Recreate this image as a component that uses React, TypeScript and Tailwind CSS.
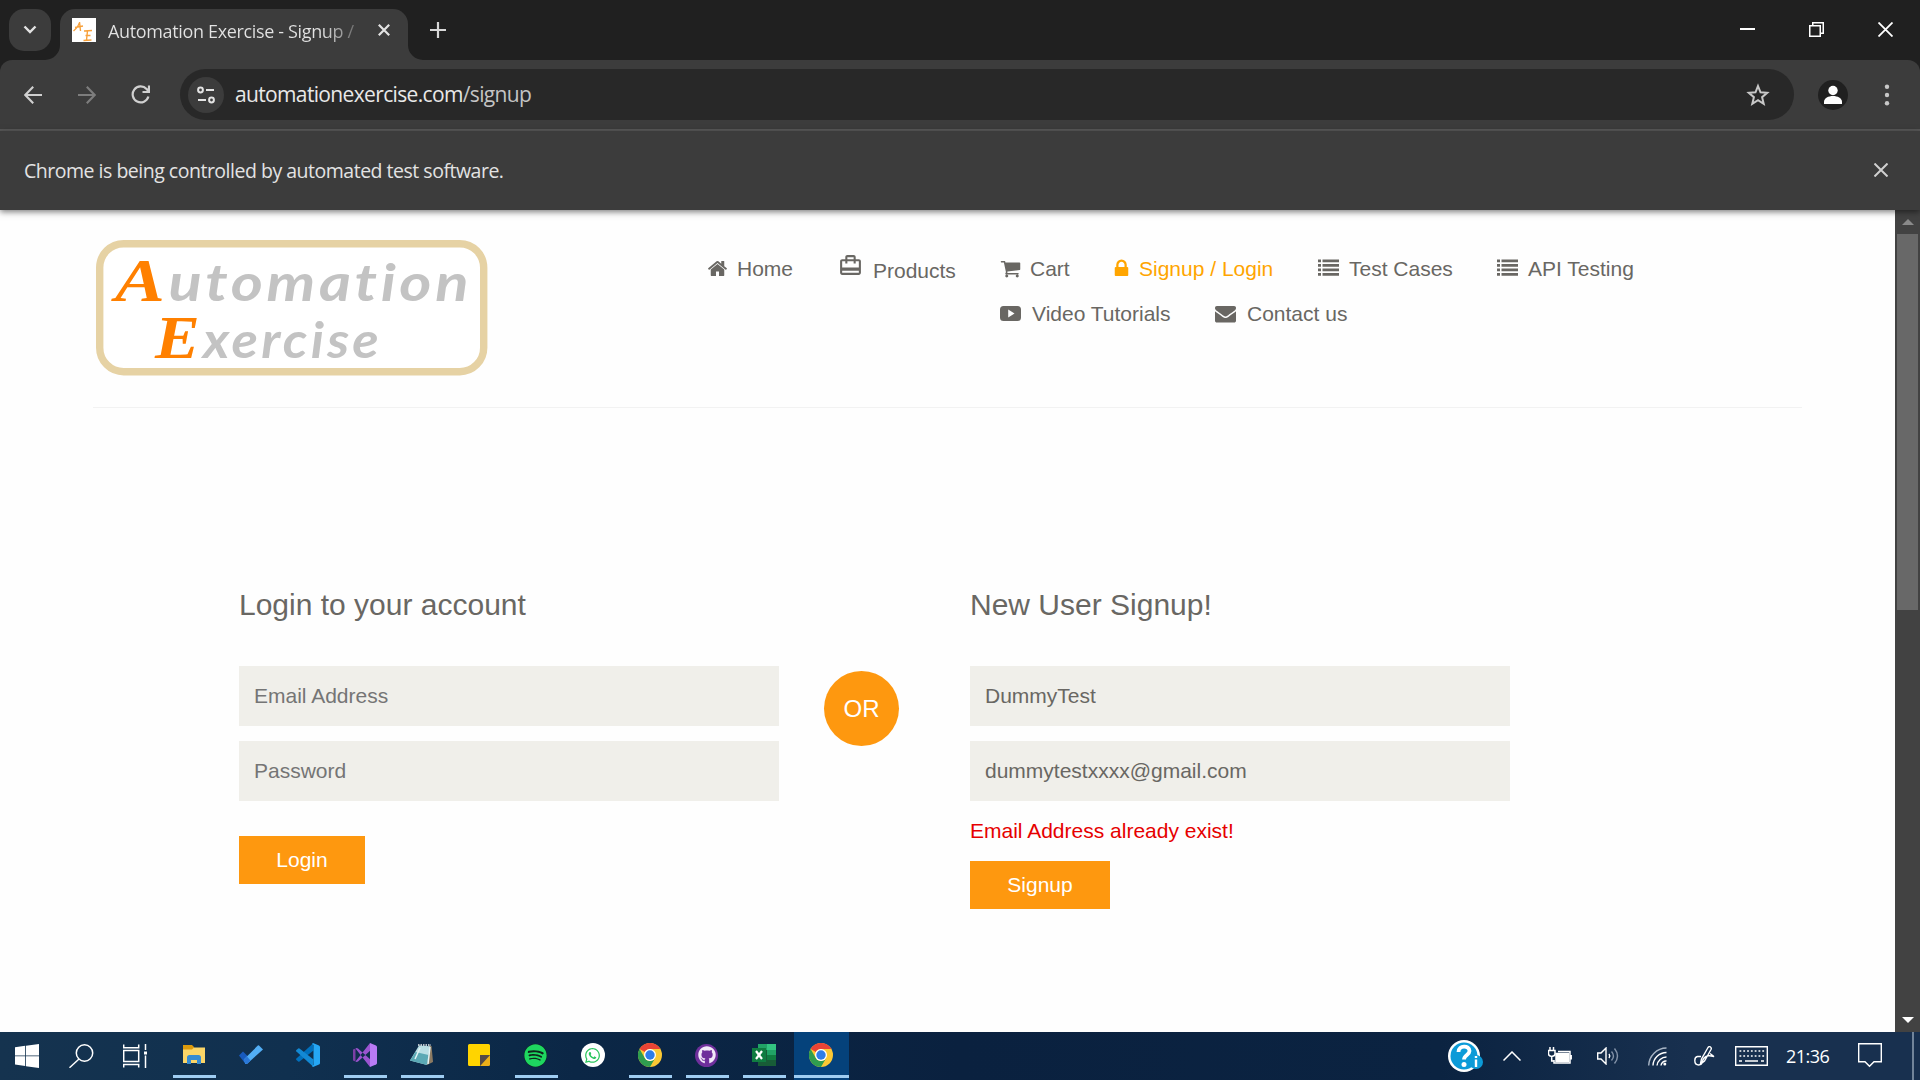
import React from "react";
import { FaSpotify, FaGithub, FaWhatsapp } from "react-icons/fa";

const HOME =
  "M1472 992v480q0 26-19 45t-45 19h-384v-384h-256v384h-384q-26 0-45-19t-19-45v-480q0-1 .5-3t.5-3l575-474 575 474q1 2 1 6zm223-69l-62 74q-8 9-21 11h-3q-13 0-21-7l-692-577-692 577q-12 8-24 7-13-2-21-11l-62-74q-8-10-7-23.5t11-21.5l719-599q32-26 76-26t76 26l244 204v-195q0-14 9-23t23-9h192q14 0 23 9t9 23v408l219 182q10 8 11 21.5t-7 23.5z";
const CART =
  "M704 1536q0 52-38 90t-90 38-90-38-38-90 38-90 90-38 90 38 38 90zm896 0q0 52-38 90t-90 38-90-38-38-90 38-90 90-38 90 38 38 90zm128-1088v512q0 24-16.5 42.5t-40.5 21.5l-1044 122q13 60 13 70 0 16-24 64h920q26 0 45 19t19 45-19 45-45 19h-1024q-26 0-45-19t-19-45q0-11 8-31.5t16-36 21.5-40 15.5-29.5l-177-823h-204q-26 0-45-19t-19-45 19-45 45-19h256q16 0 28.5 6.5t19.5 15.5 13 24.5 8 26 5.5 29.5 4.5 26h1201q26 0 45 19t19 45z";
const LOCK =
  "M640 768h512v-192q0-106-75-181t-181-75-181 75-75 181v192zm832 96v576q0 40-28 68t-68 28h-960q-40 0-68-28t-28-68v-576q0-40 28-68t68-28h32v-192q0-184 132-316t316-132 316 132 132 316v192h32q40 0 68 28t28 68z";
const MAIL =
  "M1792 710v794q0 66-47 113t-113 47h-1472q-66 0-113-47t-47-113v-794q44 49 101 87 362 246 497 345 57 42 92.5 65.5t94.5 48 110 24.5h2q51 0 110-24.5t94.5-48 92.5-65.5q170-123 498-345 57-39 100-87zm0-294q0 79-49 151t-122 123q-376 261-468 325-10 7-42.5 31t-54 38.5-52 32.5-57.5 27-50 9h-2q-23 0-50-9t-57.5-27-52-32.5-54-38.5-42.5-31q-91-64-262-182.5t-205-142.5q-62-42-117-115.5t-55-136.5q0-78 41.5-130t118.5-52h1472q65 0 112.5 47t47.5 113z";
const LIST =
  "M0 128h256v230H0zM384 128h1408v230H384zM0 512h256v230H0zM384 512h1408v230H384zM0 896h256v230H0zM384 896h1408v230H384zM0 1280h256v230H0zM384 1280h1408v230H384z";
const VIDEO =
  "M300 256h1192q300 0 300 300v680q0 300-300 300H300q-300 0-300-300V556q0-300 300-300zM700 560v680l540-340z";
const TRAVEL =
  "M20 6h-3V4c0-1.11-.89-2-2-2H9c-1.11 0-2 .89-2 2v2H4c-1.11 0-2 .89-2 2v11c0 1.11.89 2 2 2h16c1.11 0 2-.89 2-2V8c0-1.11-.89-2-2-2zM9 4h6v2H9V4zm11 15H4v-2h16v2zm0-5H4V8h3v2h2V8h6v2h2V8h3v6z";

function Glyph({ d, className = "" }: { d: string; className?: string }) {
  return (
    <svg viewBox="0 0 1792 1792" fill="currentColor" fillRule="evenodd" className={"h-[21px] w-[21px] shrink-0 " + className}>
      <path d={d} />
    </svg>
  );
}

function TabStrip() {
  return (
    <div className="flex h-[60px] items-start bg-[#202020] pl-[9px] pt-[9px] text-[#e3e3e3]">
      <div className="flex h-[42px] w-[42px] items-center justify-center rounded-[15px] bg-[#3c3c3c]">
        <svg width="14" height="10" viewBox="0 0 14 10" fill="none" stroke="currentColor" strokeWidth="2.4">
          <path d="M1.500 1.500l5.500 5.500 5.500-5.500" />
        </svg>
      </div>
      <div className="relative ml-[9px] flex h-[51px] w-[348px] rounded-t-[15px] bg-[#3c3c3c] pl-3 pt-[9px]">
        <svg className="absolute -left-[15px] bottom-0" width="15" height="15" viewBox="0 0 15 15" fill="#3c3c3c">
          <path d="M15 0v15H0A15 15 0 0 0 15 0z" />
        </svg>
        <svg className="absolute -right-[15px] bottom-0" width="15" height="15" viewBox="0 0 15 15" fill="#3c3c3c">
          <path d="M0 0v15h15A15 15 0 0 1 0 0z" />
        </svg>
        <svg width="24" height="24" viewBox="0 0 24 24" fill="none" stroke="#f7a13c" strokeWidth="1.400">
          <path d="M0 0h24v24H0z" fill="#fff" stroke="none" />
          <path d="M1.500 13C5 10 7 7 7.500 4l1 9M3 9.500l8-1.500M12 13l8-.5M15.500 13l-1 9M13.500 17.500h5M11.500 22.500l8-.5" />
        </svg>
        <div className="ml-3 mt-px h-6 w-[252px] overflow-hidden whitespace-nowrap bg-gradient-to-r from-[#e3e3e3] from-85% to-[#777] to-97% bg-clip-text font-['Open_Sans','Noto_Sans',sans-serif] text-[18px] leading-[25px] tracking-[-0.350px] text-transparent">
          Automation Exercise - Signup /
        </div>
        <svg className="ml-[18px] mt-[6px]" width="12" height="12" viewBox="0 0 12 12" stroke="currentColor" strokeWidth="2.2">
          <path d="M.8.8l10.400 10.400M11.200.8L.8 11.200" />
        </svg>
      </div>
      <svg className="ml-[22px] mt-[13px]" width="16" height="16" viewBox="0 0 16 16" stroke="#d8d8d8" strokeWidth="2.2">
        <path d="M8 0v16M0 8h16" />
      </svg>
      <svg className="ml-[1294px] mt-[13px]" width="15" height="15" viewBox="0 0 15 15" stroke="#fff" strokeWidth="2">
        <path d="M0 7h15" />
      </svg>
      <svg className="ml-[54px] mt-[13px]" width="15" height="15" viewBox="0 0 15 15" fill="none" stroke="#fff" strokeWidth="1.500">
        <path d="M.75 3.750h10.500v10.500H.75zM3.750 3.500V.75h10.500v10.500H11.500" />
      </svg>
      <svg className="ml-[54px] mt-[13px]" width="15" height="15" viewBox="0 0 15 15" stroke="#fff" strokeWidth="1.800">
        <path d="M.5.5l14 14M14.500.5l-14 14" />
      </svg>
    </div>
  );
}

function Toolbar() {
  return (
    <div className="bg-[#202020]">
      <div className="flex h-[71px] items-center rounded-t-[12px] bg-[#3c3c3c] pb-[2px] pl-[24px] text-[#d0d0d0] shadow-[inset_0_-2px_0_#585858]">
        <svg width="18" height="18" viewBox="0 0 18 18" fill="none" stroke="currentColor" strokeWidth="2.100">
          <path d="M18 9H1.500M9.200.8L1.300 9l7.900 8.200" />
        </svg>
        <svg className="ml-[36px]" width="18" height="18" viewBox="0 0 18 18" fill="none" stroke="#7d7d7d" strokeWidth="2.100">
          <path d="M0 9h16.500M8.800.8L16.700 9l-7.900 8.200" />
        </svg>
        <svg className="ml-[35px]" width="19" height="19" viewBox="0 0 19 19" fill="none" stroke="currentColor" strokeWidth="2.200">
          <path d="M17.400 11.500A8 8 0 1 1 15.600 4l2 2.400M11.500 7H18V.5" />
        </svg>
        <div className="ml-[30px] flex h-[51px] w-[1614px] items-center rounded-full bg-[#282828] pl-2">
          <div className="flex h-9 w-9 items-center justify-center rounded-full bg-[#3c3c3c]">
            <svg width="18" height="18" viewBox="0 0 18 18" fill="none" stroke="#e3e3e3" strokeWidth="2">
              <circle cx="3.500" cy="4" r="2.400" />
              <circle cx="14.500" cy="14" r="2.400" />
              <path d="M9 4h8M1 14h8" />
            </svg>
          </div>
          <div className="ml-[11px] w-[1510px] whitespace-nowrap font-['Open_Sans','Noto_Sans',sans-serif] text-[21px] leading-none tracking-[-0.650px] text-[#e8e8e8]">
            automationexercise.com<span className="text-[#c4c4c4]">/signup</span>
          </div>
          <svg className="ml-[1px]" width="24" height="24" viewBox="0 0 24 24" fill="none" stroke="#c8c8c8" strokeWidth="2">
            <path d="M12 3l2.500 6.300 6.700.5-5.100 4.400 1.600 6.600L12 17.200l-5.700 3.600 1.600-6.600-5.100-4.400 6.700-.5z" />
          </svg>
        </div>
        <svg className="ml-6" width="30" height="30" viewBox="0 0 30 30" fill="#fff">
          <circle cx="15" cy="15" r="15" fill="#202020" />
          <circle cx="15" cy="10.500" r="4.700" />
          <path d="M6 24v-2c0-8 18-8 18 0v2z" />
        </svg>
        <svg className="ml-[36px]" width="6" height="22" viewBox="0 0 6 22" fill="#c8c8c8">
          <circle cx="3" cy="2.700" r="2.200" />
          <circle cx="3" cy="11" r="2.200" />
          <circle cx="3" cy="19.300" r="2.200" />
        </svg>
      </div>
    </div>
  );
}

function InfoBar() {
  return (
    <div className="relative z-10 flex h-[79px] items-center justify-between bg-[#3c3c3c] pl-6 pr-8 shadow-[0_2px_6px_rgba(0,0,0,0.5)]">
      <div className="whitespace-nowrap font-['Open_Sans','Noto_Sans',sans-serif] text-[19.500px] leading-none tracking-[-0.490px] text-[#e3e3e3]">
        Chrome is being controlled by automated test software.
      </div>
      <svg width="14" height="14" viewBox="0 0 14 14" stroke="#d0d0d0" strokeWidth="2" className="-mt-0.5">
        <path d="M.5.5l13 13M13.500.5l-13 13" />
      </svg>
    </div>
  );
}

function Logo() {
  return (
    <svg width="392" height="136" viewBox="0 0 392 136" className="shrink-0">
      <rect x="3.700" y="3.700" width="384" height="128" rx="24" fill="#fff" stroke="#e6d2a4" strokeWidth="7.400" />
      <g fontFamily="Lato, sans-serif" fontStyle="italic" fontWeight="700" fill="#c3c3c3" className="[font-variant-ligatures:none]">
        <text x="19" y="61" fontSize="51" textLength="357" lengthAdjust="spacingAndGlyphs" className="tracking-[3px]">
          <tspan fontFamily="Liberation Serif, serif" fontSize="62" fill="#ff8000">A</tspan>utomation
        </text>
        <text x="59" y="118" fontSize="50" textLength="227" lengthAdjust="spacingAndGlyphs" className="tracking-[3px]">
          <tspan fontFamily="Liberation Serif, serif" fontSize="62" fill="#ff8000">E</tspan>xercise
        </text>
      </g>
    </svg>
  );
}

function NavItem({ className, gap, icon, children }: { className: string; gap: string; icon: React.ReactNode; children: React.ReactNode }) {
  return (
    <a className={"flex h-[45px] shrink-0 items-center whitespace-nowrap " + className}>
      <span className={"flex shrink-0 " + gap}>{icon}</span>
      {children}
    </a>
  );
}

function Header() {
  return (
    <header className="ml-[93px] flex h-[198px] w-[1709px] border-b border-[#f2f2f2] pl-[3px] pt-[30px]">
      <Logo />
      <nav className="ml-[220px] pt-[6px] text-[21px] leading-[30px] text-[#696763]">
        <div className="flex">
          <NavItem className="w-[131px]" gap="w-[29px]" icon={<Glyph d={HOME} className="-ml-px" />}>Home</NavItem>
          <NavItem
            className="w-[161px]"
            gap="w-[34px]"
            icon={
              <svg width="25" height="25" viewBox="0 0 24 24" fill="currentColor" className="-mt-[6px] -ml-px shrink-0">
                <path d={TRAVEL} />
              </svg>
            }
          >
            <span className="pt-1">Products</span>
          </NavItem>
          <NavItem className="w-[114px]" gap="w-[30px]" icon={<Glyph d={CART} />}>Cart</NavItem>
          <NavItem className="w-[204px] text-[#ffa500]" gap="w-[25px]" icon={<Glyph d={LOCK} className="-ml-[3px]" />}>Signup / Login</NavItem>
          <NavItem className="w-[179px]" gap="w-[31px]" icon={<Glyph d={LIST} />}>Test Cases</NavItem>
          <NavItem className="w-[150px]" gap="w-[31px]" icon={<Glyph d={LIST} />}>API Testing</NavItem>
        </div>
        <div className="ml-[292px] flex">
          <NavItem className="w-[215px]" gap="w-[32px]" icon={<Glyph d={VIDEO} />}>Video Tutorials</NavItem>
          <NavItem className="w-[150px]" gap="w-[32px]" icon={<Glyph d={MAIL} />}>Contact us</NavItem>
        </div>
      </nav>
    </header>
  );
}

function Field({ children, muted = false }: { children: React.ReactNode; muted?: boolean }) {
  return (
    <div className={"mb-[15px] flex h-[60px] items-center bg-[#f0efea] px-[15px] pb-[2px] text-[21px] leading-none " + (muted ? "text-[#757575]" : "text-[#696763]")}>
      {children}
    </div>
  );
}

function Forms() {
  return (
    <main className="flex pl-[239px] pt-[179px]">
      <section className="w-[540px]">
        <h2 className="mb-[44px] text-[30px] leading-[35px] text-[#696763]">Login to your account</h2>
        <Field muted>Email Address</Field>
        <Field muted>Password</Field>
        <button className="mt-[35px] block h-[48px] w-[126px] bg-[#fe980f] pb-px text-[21px] text-white">Login</button>
      </section>
      <div className="ml-[45px] mt-[84px] flex h-[75px] w-[75px] items-center justify-center rounded-full bg-[#fe980f] text-[24px] text-white">OR</div>
      <section className="ml-[71px] w-[540px]">
        <h2 className="mb-[44px] text-[30px] leading-[35px] text-[#696763]">New User Signup!</h2>
        <Field>DummyTest</Field>
        <Field>dummytestxxxx@gmail.com</Field>
        <p className="text-[21px] leading-[30px] text-[#e60000]">Email Address already exist!</p>
        <button className="mt-[15px] block h-[48px] w-[140px] bg-[#fe980f] pb-px text-[21px] text-white">Signup</button>
      </section>
    </main>
  );
}

function Scrollbar() {
  return (
    <div className="flex w-[25px] flex-col items-center bg-[#424242]">
      <svg className="mt-[9px]" width="12" height="6" viewBox="0 0 12 6" fill="#8a8a8a">
        <path d="M0 6l6-6 6 6z" />
      </svg>
      <div className="mt-[9px] h-[376px] w-[21px] bg-[#686868]" />
      <svg className="mb-[9px] mt-auto" width="12" height="6" viewBox="0 0 12 6" fill="#fff">
        <path d="M0 0l6 6 6-6z" />
      </svg>
    </div>
  );
}

function Slot({ children, open = false, active = false }: { children: React.ReactNode; open?: boolean; active?: boolean }) {
  return (
    <div className={"relative flex h-12 w-[57px] shrink-0 items-center justify-center pr-[2px] " + (active ? "bg-[linear-gradient(90deg,transparent_1px,#05427b_1px,#05427b_56px,transparent_56px)]" : "")}>
      <div className="-mt-[2px]">{children}</div>
      {(open || active) && <div className={"absolute bottom-[2px] h-[3px] bg-[#9fcdf2] " + (active ? "left-px w-[55px]" : "left-[7px] w-[43px]")} />}
    </div>
  );
}

function Chrome() {
  return (
    <svg width="24" height="24" viewBox="0 0 24 24">
      <circle cx="12" cy="12" r="12" fill="#fcc934" />
      <path d="M1.600 6A12 12 0 0 1 22.400 6H12A6 6 0 0 0 6.800 9z" fill="#ea4335" />
      <path d="M1.600 6A12 12 0 0 0 12 24l5.200-9A6 6 0 0 1 6.800 15z" fill="#2f9e4f" />
      <circle cx="12" cy="12" r="6" fill="#fff" />
      <circle cx="12" cy="12" r="4.700" fill="#2f7de9" />
    </svg>
  );
}

function Apps() {
  return (
    <div className="ml-[19px] flex">
      <Slot open>
        <svg width="22" height="20" viewBox="0 0 22 20">
          <path d="M0 0h9l2 2v4H0z" fill="#dc9a0c" />
          <path d="M0 4.500h9l2-2h11V18H0z" fill="#fbd567" />
          <path d="M4 19v-6.500Q4 10 6.500 10h9q2.500 0 2.500 2.500V19h-4v-4H8v4z" fill="#368bd2" />
        </svg>
      </Slot>
      <Slot>
        <svg width="24" height="20" viewBox="0 0 24 20">
          <path d="M0 10.500l4-4 8 8-4 4.200q-.8.600-1.600 0z" fill="#185abd" />
          <path d="M6.400 18.700q.9.700 1.800 0L24 4.500 20 .6q-.6-.5-1.200 0L4.800 14.500z" fill="#52aef5" />
          <path d="M4.500 15l3.500-3.500 3.500 4-3 3q-1 .8-2 0z" fill="#2b78d8" />
        </svg>
      </Slot>
      <Slot>
        <svg width="24" height="24" viewBox="0 0 24 24">
          <path d="M17.500 7.500L3.500 18.500q-.7.500-1.300 0L.4 16.900q-.7-.7 0-1.400L17 .5z" fill="#0070bd" />
          <path d="M17.500 16.500L3.500 5.500q-.7-.5-1.300 0L.4 7.100q-.7.700 0 1.400L17 23.500z" fill="#1389d4" />
          <path d="M17 0l6 2.500q1 .5 1 1.500v16q0 1-1 1.500L17 24l-1-1 1.500-1V2L16 1z" fill="#25a7f5" />
        </svg>
      </Slot>
      <Slot open>
        <svg width="24" height="24" viewBox="0 0 24 24">
          <path d="M0 6.500l2.500-1v13L0 17.500z" fill="#7b3fa5" />
          <path d="M2.500 5.500L17 24l1-7L5 5.500q-1.300-.8-2.500 0zM2.500 18.500L17 0l1 7L5 18.500q-1.300.8-2.500 0z" fill="#9a54d0" />
          <path d="M17 0l6 2.500q1 .5 1 1.500v16q0 1-1 1.500L17 24z" fill="#b97bf5" />
        </svg>
      </Slot>
      <Slot open>
        <svg width="24" height="22" viewBox="0 0 24 22">
          <path d="M19 1.500l2.500.5L23 18l-6 3z" fill="#8b7a62" />
          <path d="M9 1.500l11 .8L17 21 0 16.500z" fill="#b9dfe5" />
          <path d="M5.500 8l13 3-1.500 10L0 16.500z" fill="#5ba9b5" />
          <path d="M8 1h13" stroke="#eef2f2" strokeWidth="1.500" strokeDasharray="1.500 1" />
          <path d="M10 4L5 15M20 3l-2 17" stroke="#e2f3f5" strokeWidth="1.500" />
        </svg>
      </Slot>
      <Slot>
        <svg width="22" height="22" viewBox="0 0 22 22">
          <path d="M1.500 0h19Q22 0 22 1.500V11H12v11H1.500Q0 22 0 20.500v-19Q0 0 1.500 0z" fill="#ffd400" />
          <path d="M12 11h10L12 22z" fill="#554a45" />
          <path d="M22 11v9.500q0 1.500-1.500 1.500H12z" fill="#edb019" />
        </svg>
      </Slot>
      <Slot open>
        <div className="rounded-full bg-[#10241c]">
          <FaSpotify size={23} color="#1ed760" />
        </div>
      </Slot>
      <Slot>
        <div className="flex h-6 w-6 items-center justify-center rounded-full bg-white">
          <FaWhatsapp size={17} color="#2cc65e" />
        </div>
      </Slot>
      <Slot open>
        <Chrome />
      </Slot>
      <Slot open>
        <div className="flex h-[23px] w-[23px] items-center justify-center rounded-full bg-[#6e2f9b]">
          <FaGithub size={18} color="#f1e8f8" />
        </div>
      </Slot>
      <Slot open>
        <svg width="24" height="22" viewBox="0 0 24 22">
          <path d="M6 0h9v6H6z" fill="#21a366" />
          <path d="M15 0h9v6h-9z" fill="#33c481" />
          <path d="M6 6h9v10H6z" fill="#185c37" />
          <path d="M15 6h9v5h-9z" fill="#21a366" />
          <path d="M15 11h9v5h-9z" fill="#107c41" />
          <path d="M6 16h18v6H6z" fill="#185c37" />
          <path d="M0 4h14v14H0z" fill="#107c41" />
          <path d="M4 7l6 8M10 7l-6 8" stroke="#fff" strokeWidth="2.200" />
        </svg>
      </Slot>
      <Slot active>
        <Chrome />
      </Slot>
    </div>
  );
}

function Tray() {
  return (
    <div className="ml-auto flex h-12 shrink-0 items-center text-white">
      <svg width="36" height="34" viewBox="0 0 36 34">
        <circle cx="16" cy="17" r="16" fill="#fff" />
        <circle cx="16" cy="17" r="13.500" fill="#0c9bd8" />
        <path d="M10.500 13c0-7 11-7 11-1 0 4-5.500 4-5.500 8.500" fill="none" stroke="#fff" strokeWidth="3.800" />
        <circle cx="16" cy="25.500" r="2.500" fill="#fff" />
        <circle cx="28" cy="23" r="7" fill="#0c9bd8" />
        <path d="M28 20.500v7.500M28 17v2" stroke="#fff" strokeWidth="2.400" />
      </svg>
      <svg className="ml-[19px]" width="18" height="10" viewBox="0 0 18 10" fill="none" stroke="#fff" strokeWidth="1.500">
        <path d="M.5 9.500L9 1l8.500 8.500" />
      </svg>
      <svg className="ml-[27px]" width="24" height="18" viewBox="0 0 24 18" fill="none" stroke="#fff" strokeWidth="1.500">
        <path d="M2 0v3M5.500 0v3M.5 3.500H7V7Q7 9 3.700 9.500 .5 9 .5 7zM3.700 10v4H6M10 4.500h12V16H6v-3M23.200 8v4.500" />
        <path d="M8 6.500h12.500v8H8z" fill="#fff" />
      </svg>
      <svg className="ml-[25px]" width="22" height="18" viewBox="0 0 22 18" fill="none" stroke="#fff" strokeWidth="1.400">
        <path d="M.7 6H4l5-5v16l-5-5H.7z" />
        <path d="M12 7q1.500 2 0 4" />
        <path d="M14.500 4.500q4 4.500 0 9M17.500 1.500q6 7.500 0 15" stroke="#8392a8" />
      </svg>
      <svg className="ml-[29px]" width="19" height="19" viewBox="0 0 19 19" fill="none" stroke="#fff" strokeWidth="1.400">
        <path d="M.7 18.500A18 18 0 0 1 18.500 1" stroke="#a9b6c6" />
        <path d="M5 18.500A13.500 13.500 0 0 1 18.500 5.500M9 18.500a9.500 9.500 0 0 1 9.500-8.500M13 18.500a5 5 0 0 1 5.500-4.500" />
        <circle cx="16.800" cy="17" r="1.500" fill="#fff" stroke="none" />
      </svg>
      <svg className="ml-[27px]" width="21" height="20" viewBox="0 0 21 20" fill="none" stroke="#fff" strokeWidth="1.400">
        <path d="M6.500 17.500l1-4.500L14 1.500q1-1.500 2.500-.5 1.300 1 .5 2.500L10.500 15l-4 3zM7 10.500H3.500Q.8 11 .8 14.500q0 4.500 4 4.500 3 0 3.500-3 1-5 6-6.500l5.700 1-4-3" />
      </svg>
      <svg className="ml-[20px]" width="33" height="20" viewBox="0 0 33 20" fill="none" stroke="#fff" strokeWidth="1.400">
        <path d="M.7.7h31.600v18.600H.7z" />
        <path d="M4.500 5h25M4.500 10h25" strokeDasharray="1.800 2" />
        <path d="M4 15h3M10 15h13M26 15h3" />
      </svg>
      <div className="ml-[18px] w-[44px] whitespace-nowrap font-['Open_Sans','Noto_Sans',sans-serif] text-[18px] leading-none tracking-[-0.500px]">21:36</div>
      <svg className="ml-[28px] -mt-px" width="24" height="25" viewBox="0 0 24 25" fill="none" stroke="#fff" strokeWidth="1.400">
        <path d="M.7.7h22.600v18H16l-4.500 4.600L7 18.700H.7z" />
      </svg>
      <div className="ml-[30px] mr-[6px] h-12 w-[2px] bg-[#71849a]" />
    </div>
  );
}

function Taskbar() {
  return (
    <div className="flex h-12 items-center bg-[linear-gradient(90deg,#15334f_0%,#10304f_15%,#0b2746_30%,#0a213f_50%,#0b2341_75%,#18304f_88%,#18304f_100%)] pl-[15px]">
      <svg className="-mt-px" width="24" height="24" viewBox="0 0 24 24" fill="#fff">
        <path d="M0 3.300l10.200-1.500v9.600H0zM11 1.700L24 0v11.400H11zM0 12.300h10.200v9.700L0 20.600zM11 12.300h13V24l-13-1.800z" />
      </svg>
      <svg className="-mt-px ml-[30px]" width="25" height="24" viewBox="0 0 25 24" fill="none" stroke="#fff" strokeWidth="1.500">
        <circle cx="15.500" cy="9" r="8.200" />
        <path d="M10 15L.5 23.700" />
      </svg>
      <svg className="-mt-px ml-[29px]" width="24" height="24" viewBox="0 0 24 24" fill="none" stroke="#fff" strokeWidth="1.500">
        <path d="M.7.500v3.200h15V.5M.7 6.500h15v11H.7zM.7 23.500v-3h15v3M22.500 0v6M22.500 11.500V24" />
        <path d="M21 7.500h3v3h-3z" fill="#fff" stroke="none" />
      </svg>
      <Apps />
      <Tray />
    </div>
  );
}

export default function App() {
  return (
    <div className="flex h-[1080px] w-[1920px] flex-col overflow-hidden bg-white font-['Liberation_Sans',Arial,sans-serif]">
      <TabStrip />
      <Toolbar />
      <InfoBar />
      <div className="flex min-h-0 flex-1">
        <div className="min-w-0 flex-1 bg-[#fefefe]">
          <Header />
          <Forms />
        </div>
        <Scrollbar />
      </div>
      <Taskbar />
    </div>
  );
}
